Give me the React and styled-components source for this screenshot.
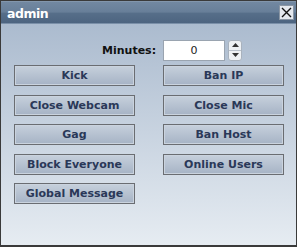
import React from "react";
import styled, { createGlobalStyle } from "styled-components";

const Global = createGlobalStyle`
  html, body { margin: 0; padding: 0; background: #fff; }
  body { font-family: "DejaVu Sans", Verdana, sans-serif; }
`;

const Window = styled.div`
  width: 297px;
  height: 247px;
  box-sizing: border-box;
  border: 1px solid #3a3a3a;
  border-bottom-width: 2px;
  display: flex;
  flex-direction: column;
  background: linear-gradient(#a5b6cb, #e6ecf2);
`;

const TitleBar = styled.div`
  height: 23px;
  flex: none;
  box-sizing: border-box;
  display: flex;
  align-items: center;
  justify-content: space-between;
  padding: 0 1px 0 6px;
  border-top: 1px solid #8296ac;
  background: linear-gradient(#7288a1 0%, #687f99 45%, #566e89 52%, #4c637f 100%);
  box-shadow: inset 0 -1px 0 #7a8fa8;
`;

const Title = styled.span`
  color: #fff;
  font-weight: bold;
  font-size: 12.5px;
  letter-spacing: -0.5px;
`;

const CloseBox = styled.div`
  width: 13px;
  height: 13px;
  margin-right: 1px;
  margin-top: -1px;
  border: 1px solid #8a96a4;
  background: #e4e8ee;
  display: flex;
  align-items: center;
  justify-content: center;
`;

const Body = styled.div`
  padding: 15px 13px 0 13px;
  display: flex;
  flex-direction: column;
`;

const MinutesRow = styled.div`
  display: flex;
  align-items: center;
  margin-left: 88px;
  height: 22px;
`;

const Label = styled.span`
  font-weight: bold;
  font-size: 11px;
  color: #111;
  width: 61px;
`;

const NumberBox = styled.div`
  width: 62px;
  height: 21px;
  box-sizing: border-box;
  border: 1px solid #9aa4b0;
  background: #fff;
  font-size: 11px;
  color: #222;
  display: flex;
  align-items: center;
  justify-content: center;
`;

const Spinner = styled.div`
  margin-left: 3px;
  width: 14px;
  height: 21px;
  box-sizing: border-box;
  border: 1px solid #a9b2bd;
  border-radius: 3px;
  background: #eef1f4;
  display: flex;
  flex-direction: column;
`;

const SpinHalf = styled.div`
  flex: 1;
  display: flex;
  align-items: center;
  justify-content: center;
  border-top: ${(p) => (p.$lower ? "1px solid #b8c0ca" : "none")};
`;

const Grid = styled.div`
  margin-top: 4px;
  display: grid;
  grid-template-columns: 121px 121px;
  column-gap: 28px;
  row-gap: 8.5px;
`;

const Button = styled.div`
  height: 21px;
  box-sizing: border-box;
  border: 1px solid #6a6d72;
  box-shadow: inset 0 0 0 1px #cad3de;
  background: linear-gradient(#c6d0dc, #a6b3c5);
  color: #2a3858;
  font-weight: bold;
  font-size: 11px;
  display: flex;
  align-items: center;
  justify-content: center;
  white-space: nowrap;
`;

const buttons = [
  "Kick",
  "Ban IP",
  "Close Webcam",
  "Close Mic",
  "Gag",
  "Ban Host",
  "Block Everyone",
  "Online Users",
  "Global Message",
];

export default function App() {
  return (
    <>
      <Global />
      <Window>
        <TitleBar>
          <Title>admin</Title>
          <CloseBox>
            <svg width="11" height="11" viewBox="0 0 11 11">
              <path d="M1 1 L10 10 M10 1 L1 10" stroke="#111" strokeWidth="1.4" />
            </svg>
          </CloseBox>
        </TitleBar>
        <Body>
          <MinutesRow>
            <Label>Minutes:</Label>
            <NumberBox>0</NumberBox>
            <Spinner>
              <SpinHalf>
                <svg width="7" height="4" viewBox="0 0 7 4">
                  <path d="M0 4 L3.5 0 L7 4 Z" fill="#333" />
                </svg>
              </SpinHalf>
              <SpinHalf $lower>
                <svg width="7" height="4" viewBox="0 0 7 4">
                  <path d="M0 0 L7 0 L3.5 4 Z" fill="#333" />
                </svg>
              </SpinHalf>
            </Spinner>
          </MinutesRow>
          <Grid>
            {buttons.map((b) => (
              <Button key={b}>{b}</Button>
            ))}
          </Grid>
        </Body>
      </Window>
    </>
  );
}
